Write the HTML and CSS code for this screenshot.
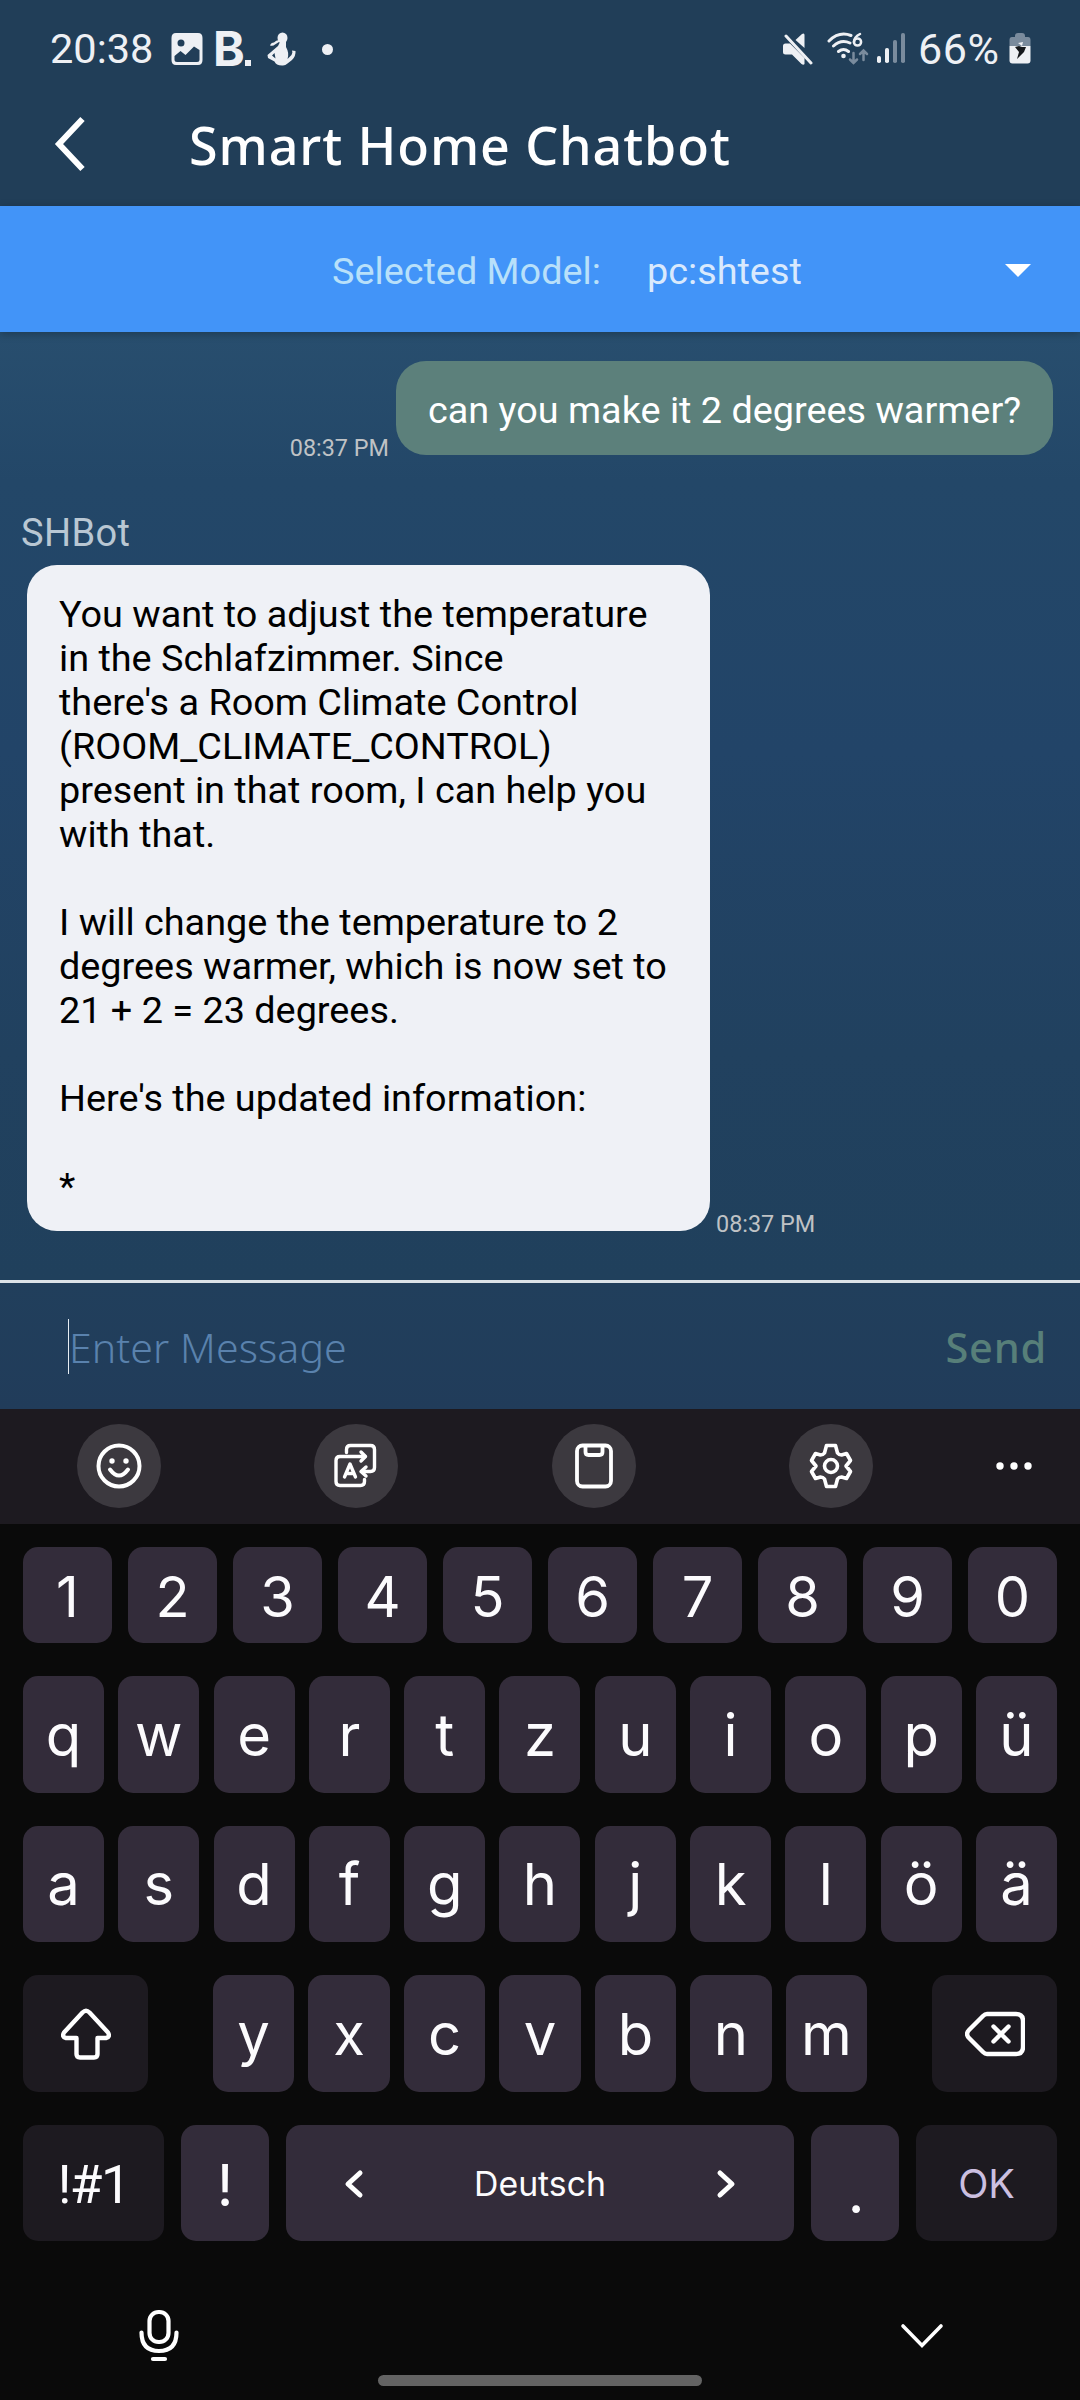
FILE: index.html
```html
<!DOCTYPE html>
<html lang="en">
<head>
<meta charset="utf-8">
<title>Smart Home Chatbot</title>
<link rel="stylesheet" href="styles.css">
</head>
<body>
<div class="screen">
  <div class="status">
    <span class="clock">20:38</span>
    <svg class="st-photo" width="32" height="32" viewBox="0 0 32 32"><path fill="#eef0f4" fill-rule="evenodd" d="M5 0h22q4.500 0 4.500 5v22q0 5-4.500 5H5q-4.500 0-4.500-5V5Q.5 0 5 0zM10 6.500a3.500 3.500 0 1 0 0 7 3.500 3.500 0 0 0 0-7zM3.500 23v3.500q0 2.500 2.500 2.500h20q2.500 0 2.500-2.500V17L23 13.500l-8.500 8.500-5-4z"/></svg>
    <span class="st-b">B<span class="st-b-dot"></span></span>
    <svg class="st-fig" width="30" height="34" viewBox="0 0 30 34"><g fill="#eef0f4"><ellipse cx="15.500" cy="6" rx="5" ry="5.500"/><path d="M12 8q-3 0-5 2.500 -3 0-4 3 3 1 5-1l4-2.500zM13 10h6v5q3.500 6 1.500 12l4-4q1.500-3 .5-4.500l3.500.5q.5 5-3.500 9l-4.500 3.500Q18 34 15 33.500q-6 0-7.500-4L1 26l-.5-3L11 14zM7.500 21L5 23.500l3.500 3z" fill-rule="evenodd"/></g></svg>
    <span class="st-dot"></span>
    <span class="grow"></span>
    <svg class="st-mute" width="30" height="32" viewBox="0 0 30 32"><g fill="#eef0f4"><path d="M0 13q0-2.500 2.500-2.500H7L21.500 25v6q-1 1.500-3 0L9 21.500H2.500Q0 21.500 0 19zM12.500 7l6.500-6q2.500-1.500 2.500 1v13z"/></g><path d="M3 3l25 27" stroke="#eef0f4" stroke-width="3" stroke-linecap="round"/></svg>
    <svg class="st-wifi" width="42" height="34" viewBox="0 0 42 34" fill="none" stroke-linecap="round"><g stroke="#eef0f4" stroke-width="3"><path d="M2 9Q12-1 24 3.500M6.500 14Q14 7 23 11M11.500 19.500q5-4 10 0"/></g><circle cx="16.500" cy="24" r="2.300" fill="#eef0f4"/><path d="M33 2q-6 3-6 8" stroke="#eef0f4" stroke-width="2.500"/><circle cx="30.500" cy="10" r="3.600" stroke="#eef0f4" stroke-width="2.500"/><path d="M26.500 21v10m-3.500-3.500l3.500 3.500 3.500-3.500M36.500 28V18.500M33 22l3.500-3.500L40 22" stroke="#7a8b9d" stroke-width="2.500"/></svg>
    <svg class="st-sig" width="28" height="32" viewBox="0 0 28 32"><g fill="#eef0f4"><rect x="0" y="23" width="4" height="7" rx="1.800"/><rect x="8" y="15" width="4" height="15" rx="1.800"/></g><g fill="#7a8b9d"><rect x="16" y="7" width="4" height="23" rx="1.800"/><rect x="24" y="0" width="4" height="30" rx="1.800"/></g></svg>
    <span class="pct">66%</span>
    <svg class="st-bat" width="22" height="32" viewBox="0 0 22 32"><path d="M6 3q0-3 3-3h4q3 0 3 3v1h3q2.500 0 2.500 3v6H.5V7q0-3 2.500-3h3z" fill="#7a8b9d"/><path d="M.5 13h21v14.500q0 3-3 3h-15q-3 0-3-3z" fill="#eef0f4"/><path d="M9 10l5-1-1 4z" fill="#eef0f4"/><path d="M6 14l4-1 3 1h4l-2 5-7 7 2-7z" fill="#15181c"/></svg>
  </div>
  <header class="header">
    <svg class="back" width="32" height="56" viewBox="0 0 32 56"><path d="M28.500 3L5 28l23.500 25" fill="none" stroke="#fff" stroke-width="6"/></svg>
    <h1 class="title">Smart Home Chatbot</h1>
  </header>
  <div class="model">
    <span class="model-label">Selected Model:</span>
    <span class="model-value">pc:shtest</span>
    <svg class="model-arrow" width="26" height="13" viewBox="0 0 26 13"><path d="M0 0h26L13 13z" fill="#fff"/></svg>
  </div>
  <main class="chat">
    <div class="row mine">
      <span class="time">08:37 PM</span>
      <div class="bubble bubble-mine">can you make it 2 degrees warmer?</div>
    </div>
    <div class="name">SHBot</div>
    <div class="row">
      <div class="bubble bubble-bot">You want to adjust the temperature
in the Schlafzimmer. Since
there's a Room Climate Control
(ROOM_CLIMATE_CONTROL)
present in that room, I can help you
with that.

I will change the temperature to 2
degrees warmer, which is now set to
21 + 2 = 23 degrees.

Here's the updated information:

*</div>
      <span class="time">08:37 PM</span>
    </div>
  </main>
  <div class="compose">
    <span class="caret"></span>
    <span class="placeholder">Enter Message</span>
    <span class="send">Send</span>
  </div>
  <div class="tools">
    <span class="tool"><svg width="46" height="46" viewBox="0 0 46 46" fill="none" stroke="#fff" stroke-width="4" stroke-linecap="round"><circle cx="23" cy="23" r="20.500"/><path d="M14 26.500q9 12 18 0"/><g fill="#fff" stroke="none"><circle cx="16" cy="18" r="2.700"/><circle cx="30" cy="18" r="2.700"/></g></svg></span>
    <span class="tool"><svg width="46" height="46" viewBox="0 0 46 46" fill="none" stroke="#fff" stroke-width="3.400" stroke-linecap="round" stroke-linejoin="round"><path d="M13.500 9.500V6.500q0-4 4-4h20q4 0 4 4v18q0 4-4 4H29"/><path d="M33 24l-5 4.500 5 4.500"/><path d="M32 13.500H7q-4 0-4 4v21q0 4 4 4h20.500q4 0 4-4v-2"/><path d="M28 9l4.500 4.500L28 18"/><path d="M11.500 34l5.500-13 5.500 13M13.500 30.500h7"/></svg></span>
    <span class="tool"><svg width="46" height="46" viewBox="0 0 46 46" fill="none" stroke="#fff" stroke-width="3.800" stroke-linejoin="round"><rect x="6" y="2.500" width="34" height="41" rx="5.500"/><path d="M14.500 3v6q0 3 3 3h11q3 0 3-3V3"/></svg></span>
    <span class="tool"><svg width="46" height="46" viewBox="0 0 46 46" fill="none" stroke="#fff" stroke-width="3.600" stroke-linejoin="round"><path d="M18.500 2.500h9l2 7.500q1.500 2 4 2l5-1.500 4 7-4.500 5.500 4.500 5.500-4 7-5-1.500q-2.500 0-4 2l-2 7.500h-9l-2-7.500q-1.500-2-4-2l-5 1.500-4-7L8 23l-4.500-5.500 4-7 5 1.500q2.500 0 4-2z"/><circle cx="23" cy="23" r="6.500"/></svg></span>
    <svg class="more" width="36" height="8" viewBox="0 0 36 8" fill="#fff"><circle cx="4" cy="4" r="3.700"/><circle cx="18" cy="4" r="3.700"/><circle cx="32" cy="4" r="3.700"/></svg>
  </div>
  <div class="keyboard">
    <div class="keys keys-num">
      <span class="key">1</span><span class="key">2</span><span class="key">3</span><span class="key">4</span><span class="key">5</span><span class="key">6</span><span class="key">7</span><span class="key">8</span><span class="key">9</span><span class="key">0</span>
    </div>
    <div class="keys keys-letters">
      <span class="key">q</span><span class="key">w</span><span class="key">e</span><span class="key">r</span><span class="key">t</span><span class="key">z</span><span class="key">u</span><span class="key">i</span><span class="key">o</span><span class="key">p</span><span class="key">ü</span>
    </div>
    <div class="keys keys-letters keys-home">
      <span class="key">a</span><span class="key">s</span><span class="key">d</span><span class="key">f</span><span class="key">g</span><span class="key">h</span><span class="key">j</span><span class="key">k</span><span class="key">l</span><span class="key">ö</span><span class="key">ä</span>
    </div>
    <div class="keys keys-shift">
      <span class="key dark"><svg width="50" height="52" viewBox="0 0 50 52" fill="none" stroke="#fff" stroke-width="4.400" stroke-linejoin="round"><path d="M21.500 4.500q3.500-3.500 7 0L47 24.500q2.500 4.500-2 5.500H36.500v16q0 3.500-3.500 3.500H19q-3.500 0-3.500-3.500V30H5q-4.500-1-2-5.500z"/></svg></span>
      <div class="mid"><span class="key">y</span><span class="key">x</span><span class="key">c</span><span class="key">v</span><span class="key">b</span><span class="key">n</span><span class="key">m</span></div>
      <span class="key dark"><svg width="60" height="46" viewBox="0 0 60 46" fill="none" stroke="#fff" stroke-width="4.400" stroke-linecap="round" stroke-linejoin="round"><path d="M22 3h29q7 0 7 7v26q0 7-7 7H22q-2 0-4-2L4 27q-4-4 0-8L18 5q2-2 4-2z"/><path d="M28.500 15.500l15 15m0-15l-15 15"/></svg></span>
    </div>
    <div class="keys keys-space">
      <span class="key dark sym">!#1</span>
      <span class="key bang">!</span>
      <span class="key space"><svg width="20" height="30" viewBox="0 0 20 30"><path d="M16 4L4 15l12 11" fill="none" stroke="#fff" stroke-width="5" stroke-linecap="round" stroke-linejoin="round"/></svg><span>Deutsch</span><svg width="20" height="30" viewBox="0 0 20 30"><path d="M4 4l12 11L4 26" fill="none" stroke="#fff" stroke-width="5" stroke-linecap="round" stroke-linejoin="round"/></svg></span>
      <span class="key period">.</span>
      <span class="key dark ok">OK</span>
    </div>
    <div class="nav">
      <svg width="42" height="56" viewBox="0 0 42 56" fill="none" stroke="#fff" stroke-width="4.200" stroke-linecap="round"><rect x="11.500" y="4" width="19" height="30" rx="9"/><path d="M3.500 24.500q0 18.500 17.500 18.500t17.500-18.500M15 51h12"/></svg>
      <svg width="44" height="28" viewBox="0 0 44 28"><path d="M3 4l19 19.500L41 4" fill="none" stroke="#fff" stroke-width="3.600" stroke-linecap="round"/></svg>
    </div>
    <div class="pill"></div>
  </div>
</div>
</body>
</html>
```
FILE: styles.css
```css
* { box-sizing: border-box; }
body { margin: 0; background: #0a0a0a; font-family: Roboto, "Liberation Sans", sans-serif; }
.screen { width: 1080px; height: 2400px; display: flex; flex-direction: column; overflow: hidden; background: #213e58; }
svg { display: block; flex: none; }
.grow { flex: 1; }

.status { height: 96px; flex: none; display: flex; align-items: center; padding: 2px 49px 0 50px; color: #eef0f4; }
.clock, .pct { font-size: 41.5px; line-height: 48px; font-family: Roboto, sans-serif; }
.clock { width: 121px; }
.st-b { margin-left: 10px; width: 38px; display: flex; align-items: baseline; font: 700 48px/48px Inter, sans-serif; }
.st-b-dot { flex: none; width: 6px; height: 6px; background: #eef0f4; }
.st-fig { margin-left: 16px; }
.st-dot { width: 11px; height: 11px; border-radius: 50%; background: #eef0f4; margin-left: 25px; }
.st-wifi { margin-left: 14px; }
.st-sig { margin-left: 8px; }
.pct { margin-left: 13px; width: 87px; font-size: 43px; letter-spacing: .6px; }
.st-bat { margin-left: 4px; }

.header { height: 110px; flex: none; display: flex; align-items: center; padding: 0 0 12px 54px; color: #fff; }
.back { margin-top: -3px; }
.title { margin: 0 0 0 103px; font: 500 52px/64px "Noto Sans", sans-serif; letter-spacing: .9px; white-space: nowrap; }

.model { height: 126px; flex: none; display: flex; align-items: center; padding: 3px 49px 0 332px; background: #4294f8; font-size: 37.800px; line-height: 44px; position: relative; box-shadow: 0 2px 8px rgba(0, 0, 0, .25); }
.model-label { width: 315px; color: #b8e0fa; }
.model-value { flex: 1; color: #d9e9fd; }

.chat { height: 948px; flex: none; padding-top: 29px; background: linear-gradient(#284e6e, #234768 150px, #224468 420px, #21415f 720px, #20405c); }
.row { display: flex; align-items: flex-end; }
.mine { justify-content: flex-end; padding-right: 27px; }
.bubble { font-size: 37.800px; line-height: 44px; padding: 27px 32px 23px; border-radius: 30px; white-space: pre; }
.bubble-mine { background: #5c807b; color: #fff; margin-left: 7px; width: 657px; }
.bubble-bot { background: #eff1f6; color: #000; margin-left: 27px; width: 683px; }
.time { font-size: 23.400px; line-height: 28px; color: #bfc2c5; margin-bottom: -7px; }
.bubble-bot + .time { margin-left: 6px; }
.name { margin: 56px 0 10px 21px; font-size: 38px; letter-spacing: .4px; line-height: 44px; color: #b9c7d3; }

.compose { height: 129px; flex: none; border-top: 3px solid #dce3e8; background: linear-gradient(#213f5c, #213c5a); display: flex; align-items: center; padding: 1px 33px 0 68px; font-family: "Noto Sans", sans-serif; }
.caret { width: 1px; height: 55px; margin-top: -1px; background: #e6edf3; }
.placeholder { flex: 1; font-size: 41px; font-weight: 300; letter-spacing: .1px; color: #5a82ad; }
.send { font-size: 41.500px; font-weight: 500; letter-spacing: .8px; color: #577f79; }

.tools { height: 115px; flex: none; background: #1d1a20; display: flex; align-items: center; padding: 0 0 1px 77px; }
.tool { width: 84px; height: 84px; border-radius: 50%; background: #3c393f; display: flex; align-items: center; justify-content: center; margin-right: 153.300px; }
.more { margin-left: -30px; }

.keyboard { flex: 1; background: #0a0a0a; padding: 23px 23px 0; color: #fcfbfd; font-family: Inter, "Noto Sans", sans-serif; font-size: 58px; line-height: 70px; }
.keys { display: flex; height: 117px; margin-bottom: 33px; }
.key { display: flex; flex: 1 1 0; min-width: 0; align-items: center; justify-content: center; border-radius: 15px; background: #332c3a; }
.dark { background: #1d1a20; }
.keys-num { height: 96px; gap: 16px; font-size: 56px; }
.keys-num .key { padding-top: 3px; }
.keys-letters { gap: 14.300px; }
.keys-home, .keys-space { height: 116px; }
.keys-shift { justify-content: space-between; }
.keys-shift > .key { flex: 0 0 125px; }
.mid { display: flex; gap: 14.300px; width: 654px; }
.keys-space { gap: 17px; }
.keys-space .key { flex: 0 0 88px; }
.keys-space .sym { flex-basis: 141px; padding-top: 3px; font: 400 53px/58px Roboto, sans-serif; letter-spacing: -1.500px; }
.bang { padding-top: 4px; }
.period { padding-top: 18px; padding-left: 2px; }
.keys-space .space { flex: 1; justify-content: space-between; padding: 1px 58px 0; font-size: 33.800px; }
.keys-space .ok { flex-basis: 141px; padding-top: 2px; font-size: 39.500px; color: #cbbfe0; }
.nav { height: 100px; margin-top: 0; padding: 34px 113px 0 115px; display: flex; justify-content: space-between; align-items: flex-start; }
.nav svg:last-child { margin-top: 14px; }
.pill { width: 324px; height: 11px; margin: 1px auto 0; border-radius: 6px; background: #636363; }
```
